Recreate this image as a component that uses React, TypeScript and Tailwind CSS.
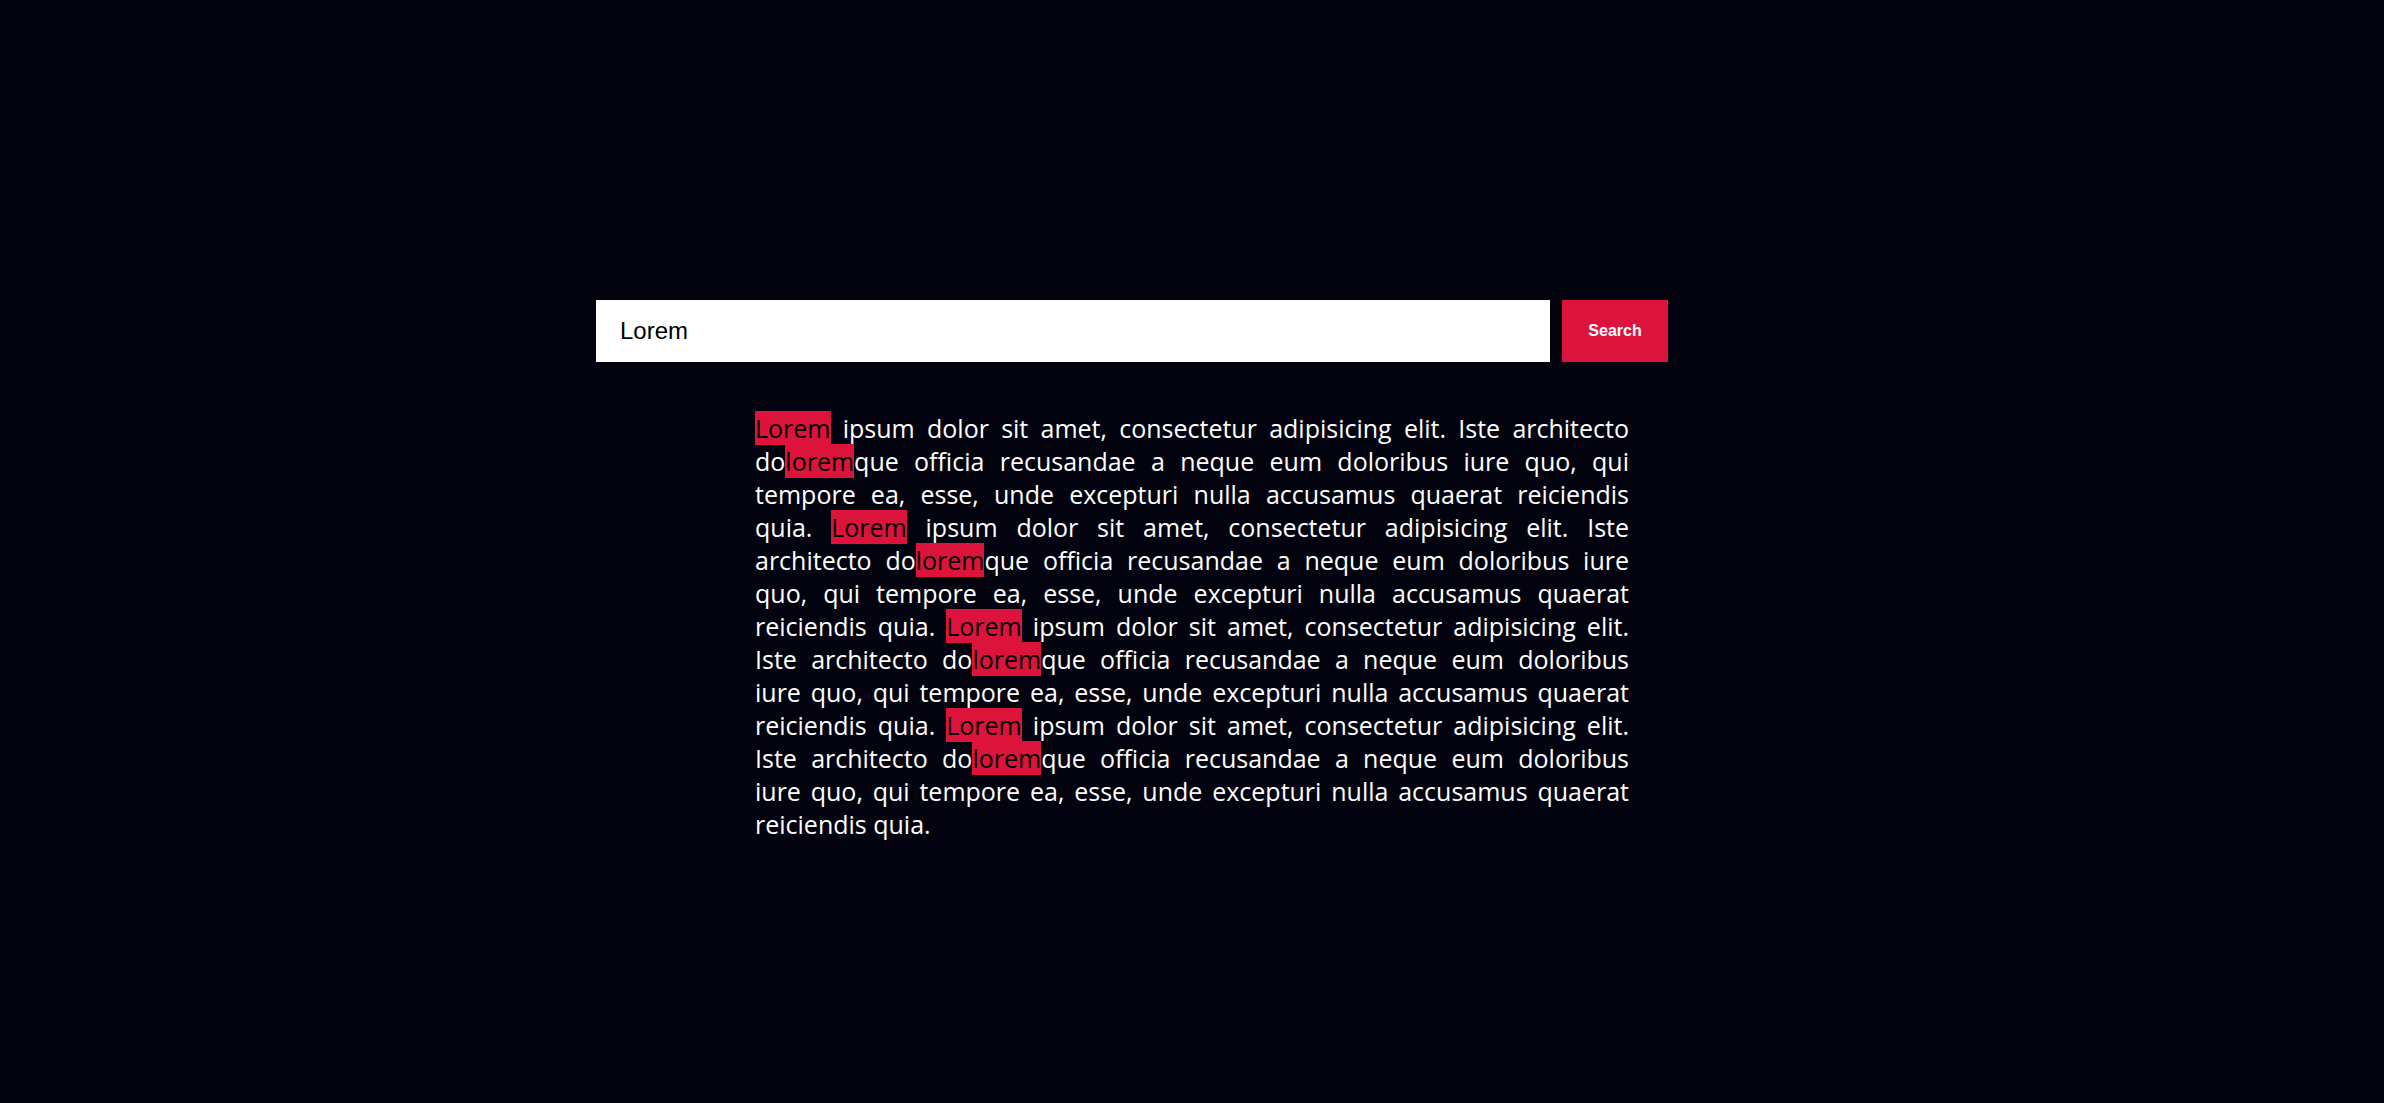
import React, { useState } from "react";

// line breaks as they fall in the justified column
const LINES: string[] = [
  "Lorem ipsum dolor sit amet, consectetur adipisicing elit. Iste architecto",
  "doloremque officia recusandae a neque eum doloribus iure quo, qui",
  "tempore ea, esse, unde excepturi nulla accusamus quaerat reiciendis",
  "quia. Lorem ipsum dolor sit amet, consectetur adipisicing elit. Iste",
  "architecto doloremque officia recusandae a neque eum doloribus iure",
  "quo, qui tempore ea, esse, unde excepturi nulla accusamus quaerat",
  "reiciendis quia. Lorem ipsum dolor sit amet, consectetur adipisicing elit.",
  "Iste architecto doloremque officia recusandae a neque eum doloribus",
  "iure quo, qui tempore ea, esse, unde excepturi nulla accusamus quaerat",
  "reiciendis quia. Lorem ipsum dolor sit amet, consectetur adipisicing elit.",
  "Iste architecto doloremque officia recusandae a neque eum doloribus",
  "iure quo, qui tempore ea, esse, unde excepturi nulla accusamus quaerat",
  "reiciendis quia.",
];

function Highlighted({ text, query }: { text: string; query: string }) {
  if (!query) return <>{text}</>;
  const parts = text.split(new RegExp(`(${query})`, "gi"));
  return (
    <>
      {parts.map((part, i) =>
        part.toLowerCase() === query.toLowerCase() ? (
          <mark key={i} className="bg-[#dc143c] text-black">
            {part}
          </mark>
        ) : (
          <React.Fragment key={i}>{part}</React.Fragment>
        )
      )}
    </>
  );
}

export default function App(): JSX.Element {
  const [query, setQuery] = useState<string>("Lorem");

  return (
    <div className="min-h-[1103px] w-full bg-[#03030f] pt-[300px]">
      <div className="ml-[596px] flex items-stretch gap-3">
        <input
          type="text"
          value={query}
          onChange={(e) => setQuery(e.target.value)}
          className="h-[62px] w-[954px] bg-white pl-6 text-[24px] text-black outline-none [font-family:'Liberation_Sans',Arial,sans-serif]"
        />
        <button className="h-[62px] w-[106px] bg-[#dc143c] text-[16px] font-bold text-white [font-family:'Liberation_Sans',Arial,sans-serif]">
          Search
        </button>
      </div>

      <div className="mx-auto mt-[50px] w-[874px] text-[25px] leading-[33px] text-white [font-family:'Open_Sans',sans-serif]">
        {LINES.map((line, i) => (
          <p
            key={i}
            className={
              i === LINES.length - 1
                ? "whitespace-nowrap text-left"
                : "whitespace-nowrap text-justify [text-align-last:justify]"
            }
          >
            <Highlighted text={line} query={query} />
          </p>
        ))}
      </div>
    </div>
  );
}
